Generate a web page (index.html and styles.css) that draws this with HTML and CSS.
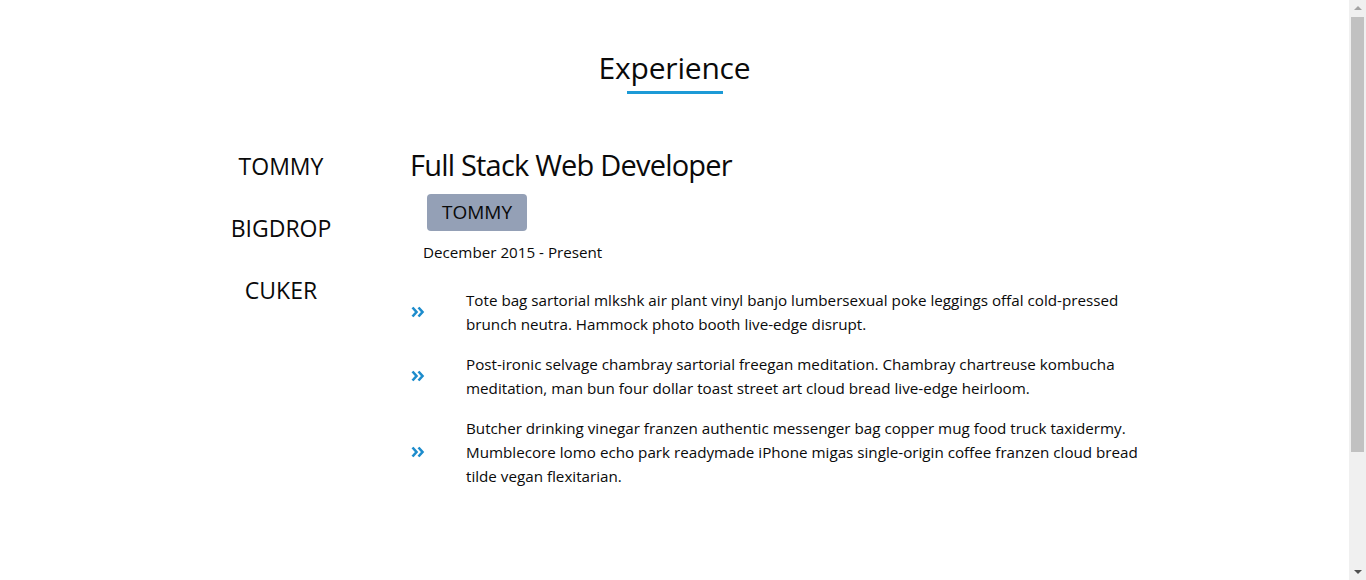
FILE: index.html
```html
<!DOCTYPE html>
<html lang="en">
<head>
<meta charset="utf-8">
<title>Experience</title>
<link rel="stylesheet" href="styles.css">
</head>
<body>
<main class="page">
<section class="experience">
  <h2 class="section-title">Experience</h2>
  <div class="exp-row">
    <ul class="tabs">
      <li class="tab">TOMMY</li>
      <li class="tab">BIGDROP</li>
      <li class="tab">CUKER</li>
    </ul>
    <div class="job">
      <h3 class="job-title">Full Stack Web Developer</h3>
      <span class="badge">TOMMY</span>
      <p class="date">December 2015 - Present</p>
      <ul class="duties">
        <li class="duty">
          <svg class="chev" viewBox="0 0 14 12" aria-hidden="true"><path d="M1.5 1.5 L5.5 6 L1.5 10.5 M7.5 1.5 L11.5 6 L7.5 10.5" fill="none" stroke="currentColor" stroke-width="2.6"/></svg>
          <p>Tote bag sartorial mlkshk air plant vinyl banjo lumbersexual poke leggings offal cold-pressed brunch neutra. Hammock photo booth live-edge disrupt.</p>
        </li>
        <li class="duty">
          <svg class="chev" viewBox="0 0 14 12" aria-hidden="true"><path d="M1.5 1.5 L5.5 6 L1.5 10.5 M7.5 1.5 L11.5 6 L7.5 10.5" fill="none" stroke="currentColor" stroke-width="2.6"/></svg>
          <p>Post-ironic selvage chambray sartorial freegan meditation. Chambray chartreuse kombucha meditation, man bun four dollar toast street art cloud bread live-edge heirloom.</p>
        </li>
        <li class="duty">
          <svg class="chev" viewBox="0 0 14 12" aria-hidden="true"><path d="M1.5 1.5 L5.5 6 L1.5 10.5 M7.5 1.5 L11.5 6 L7.5 10.5" fill="none" stroke="currentColor" stroke-width="2.6"/></svg>
          <p>Butcher drinking vinegar franzen authentic messenger bag copper mug food truck taxidermy. Mumblecore lomo echo park readymade iPhone migas single-origin coffee franzen cloud bread tilde vegan flexitarian.</p>
        </li>
      </ul>
    </div>
  </div>
</section>
</main>
<div class="scrollbar" aria-hidden="true">
  <span class="sb-up"></span>
  <span class="sb-thumb"></span>
  <span class="sb-down"></span>
</div>
</body>
</html>
```

FILE: styles.css
```css
html, body {
  margin: 0;
  padding: 0;
}
body {
  font-family: "Open Sans", "Noto Sans", sans-serif;
  color: #0a0a0a;
  background: #fff;
}
.page {
  width: 1349px;
}
.experience {
  padding-top: 48px;
}
.section-title {
  margin: 0;
  text-align: center;
  font-weight: 400;
  font-size: 30px;
  letter-spacing: -0.2px;
  line-height: 40px;
}
.section-title::after {
  content: "";
  display: block;
  width: 96px;
  height: 3px;
  background: #1c9ad6;
  margin: 3px auto 0;
}
.exp-row {
  display: flex;
  margin-top: 51px;
  padding-left: 181px;
}
.tabs {
  list-style: none;
  margin: 0;
  padding: 5px 0 0;
  width: 200px;
  display: flex;
  flex-direction: column;
  gap: 30px;
}
.tab {
  text-align: center;
  font-size: 23px;
  line-height: 32px;
}
.job {
  margin-left: 29px;
  width: 740px;
}
.job-title {
  margin: 0;
  font-weight: 400;
  font-size: 29px;
  letter-spacing: -0.8px;
  line-height: 40px;
}
.badge {
  display: inline-block;
  margin: 9px 0 0 17px;
  padding: 0 15px;
  height: 37px;
  line-height: 37px;
  font-size: 19px;
  background: #94a0b6;
  border-radius: 4px;
}
.date {
  margin: 9px 0 0 13px;
  font-size: 15.2px;
  line-height: 24px;
}
.duties {
  list-style: none;
  margin: 24px 0 0;
  padding: 0;
  display: flex;
  flex-direction: column;
  gap: 16px;
}
.duty {
  display: flex;
  align-items: center;
}
.chev {
  width: 14px;
  height: 12px;
  color: #1d8ccc;
  flex: none;
  margin-left: 1px;
}
.duty p {
  margin: 0 0 0 41px;
  font-size: 15.2px;
  line-height: 24px;
  width: 690px;
}
.scrollbar {
  position: fixed;
  top: 0;
  right: 0;
  width: 17px;
  height: 100%;
  background: #f0f0f0;
  display: flex;
  flex-direction: column;
  align-items: center;
}
.sb-up, .sb-down {
  width: 0;
  height: 0;
  border-left: 4px solid transparent;
  border-right: 4px solid transparent;
  flex: none;
}
.sb-up {
  margin-top: 6px;
  border-bottom: 4px solid #a3a3a3;
}
.sb-thumb {
  width: 13px;
  margin-top: 7px;
  height: 435px;
  background: #c1c1c1;
  flex: none;
}
.sb-down {
  margin-top: auto;
  margin-bottom: 6px;
  border-top: 4px solid #505050;
}
```
